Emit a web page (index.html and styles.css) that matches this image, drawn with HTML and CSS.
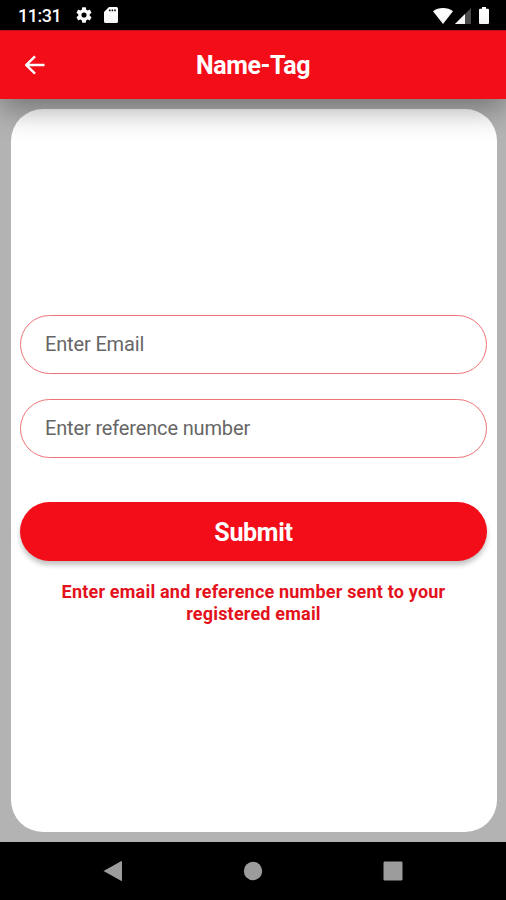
FILE: index.html
```html
<!DOCTYPE html>
<html lang="en">
<head>
  <meta charset="UTF-8">
  <meta name="viewport" content="width=device-width, initial-scale=1">
  <title>Name-Tag</title>
  <link rel="stylesheet" href="styles.css">
</head>
<body>
  <div class="status-bar">
    <span class="time">11:31</span>
    <svg class="icon-gear" viewBox="2 2 20 20"><path d="M19.14 12.94c.04-.3.06-.61.06-.94s-.02-.64-.07-.94l2.03-1.58a.49.49 0 0 0 .12-.61l-1.92-3.32a.49.49 0 0 0-.59-.22l-2.39.96c-.5-.38-1.03-.7-1.62-.94l-.36-2.54a.48.48 0 0 0-.48-.41h-3.84a.48.48 0 0 0-.47.41l-.36 2.54c-.59.24-1.13.57-1.62.94l-2.39-.96a.48.48 0 0 0-.59.22L2.74 8.87a.47.47 0 0 0 .12.61l2.03 1.58c-.05.3-.09.63-.09.94s.02.64.07.94l-2.03 1.58a.49.49 0 0 0-.12.61l1.92 3.32c.12.22.37.29.59.22l2.39-.96c.5.38 1.03.7 1.62.94l.36 2.54c.05.24.24.41.48.41h3.84c.24 0 .44-.17.47-.41l.36-2.54c.59-.24 1.13-.56 1.62-.94l2.39.96c.22.08.47 0 .59-.22l1.92-3.32a.47.47 0 0 0-.12-.61zM12 15.2A3.2 3.2 0 1 1 12 8.800a3.200 3.200 0 0 1 0 6.400z"/></svg>
    <svg class="icon-card" viewBox="0 0 14 16"><path fill-rule="evenodd" d="M5 0h7.5Q14 0 14 1.500v13q0 1.500-1.500 1.500h-11Q0 16 0 14.500V5zM5 2.500v1.800h1.500V2.500zM7.600 2.500v1.800h1.500V2.500zM10.200 2.500v1.800h1.500V2.500z"/></svg>
    <div class="signals">
      <svg class="icon-wifi" viewBox="0 0 20 16"><path d="M10 16L0 3.300Q4.300 0 10 0t10 3.300z"/></svg>
      <svg class="icon-cell" viewBox="0 0 16 16"><path opacity=".3" d="M0 16L16 0v16z"/><path d="M0 16L10 6v10z"/></svg>
      <svg class="icon-battery" viewBox="0 0 10 17"><path d="M3 0h4v1.700h2q1 0 1 1V16q0 1-1 1H1q-1 0-1-1V2.700q0-1 1-1h2z"/></svg>
    </div>
  </div>

  <header class="app-bar">
    <svg class="icon-back" viewBox="0 0 20 20"><path d="M19.500 10H1.500M10 1.300L1.300 10l8.700 8.700"/></svg>
    <h1>Name-Tag</h1>
  </header>

  <main class="content">
    <form class="card">
      <input class="field" type="text" placeholder="Enter Email">
      <input class="field" type="text" placeholder="Enter reference number">
      <button class="submit" type="button">Submit</button>
      <p class="hint">Enter email and reference number sent to your registered email</p>
    </form>
  </main>

  <nav class="nav-bar">
    <svg viewBox="0 0 22 22"><path d="M1.500 11L19 1.200Q20 .7 20 1.700v18.600q0 1-1 .5z"/></svg>
    <svg viewBox="0 0 22 22"><circle cx="11" cy="11" r="9.200"/></svg>
    <svg viewBox="0 0 22 22"><rect x="1.500" y="1.500" width="19" height="19" rx="1.300"/></svg>
  </nav>
</body>
</html>
```

FILE: styles.css
```css
* {
  box-sizing: border-box;
}
body {
  margin: 0;
  height: 900px;
  display: flex;
  flex-direction: column;
  background-color: #b3b3b3;
  font-family: Roboto, "Liberation Sans", sans-serif;
}
.status-bar {
  height: 30px;
  padding: 0 17px 0 18px;
  display: flex;
  align-items: center;
  background-color: #000;
  color: #fff;
  fill: #fff;
}
.time {
  width: 58px;
  font-size: 18px;
  font-weight: 500;
  letter-spacing: -0.5px;
  line-height: 30px;
  padding-top: 2px;
}
.icon-gear {
  width: 16px;
  height: 16px;
}
.icon-card {
  width: 14px;
  height: 16px;
  margin-left: 12px;
}
.signals {
  margin-left: auto;
  display: flex;
  align-items: flex-end;
}
.icon-wifi {
  width: 20px;
  height: 16px;
}
.icon-cell {
  width: 16px;
  height: 16px;
  margin-left: 2px;
}
.icon-battery {
  width: 10px;
  height: 17px;
  margin-left: 8px;
}
.app-bar {
  height: 69px;
  display: grid;
  grid-template-columns: 70px 1fr 70px;
  align-items: center;
  background-color: #f20d19;
  border-top: 1px solid #b80d14;
  color: #fff;
  box-shadow: 0 10px 30px rgba(0, 0, 0, 0.36);
  z-index: 1;
}
.icon-back {
  width: 20px;
  height: 20px;
  margin-left: 25px;
  fill: none;
  stroke: #fff;
  stroke-width: 2.4;
}
.app-bar h1 {
  margin: 0;
  padding-top: 1px;
  text-align: center;
  font-size: 25px;
  font-weight: 700;
  letter-spacing: -0.4px;
}
.content {
  flex: 1;
  padding: 9.5px 9.5px 10.5px 10.5px;
  display: flex;
}
.card {
  flex: 1;
  padding: 206px 9.5px 0;
  background-color: #fff;
  border-radius: 32px;
}
.field {
  display: block;
  width: 100%;
  height: 59px;
  margin-bottom: 25px;
  padding: 0 24px;
  border: 1px solid #ec7377;
  border-radius: 30px;
  background-color: #fff;
  font-family: inherit;
  font-size: 20px;
  letter-spacing: -0.15px;
}
.field::placeholder {
  color: #666;
}
.submit {
  display: block;
  width: 100%;
  height: 59px;
  margin-top: 44px;
  padding: 2px 0 0;
  border: none;
  border-radius: 30px;
  background-color: #f20d19;
  color: #fff;
  font-family: inherit;
  font-size: 25px;
  font-weight: 700;
  letter-spacing: -0.3px;
  box-shadow: 0 4px 5px rgba(0, 0, 0, 0.24);
}
.hint {
  margin: 20px 30px 0;
  color: #e3121b;
  font-size: 18px;
  font-weight: 700;
  line-height: 22px;
  letter-spacing: 0.2px;
  text-align: center;
}
.nav-bar {
  height: 58px;
  display: flex;
  justify-content: center;
  align-items: center;
  gap: 118px;
  background-color: #000;
  fill: #9c9c9c;
}
.nav-bar svg {
  width: 22px;
  height: 22px;
}
```
